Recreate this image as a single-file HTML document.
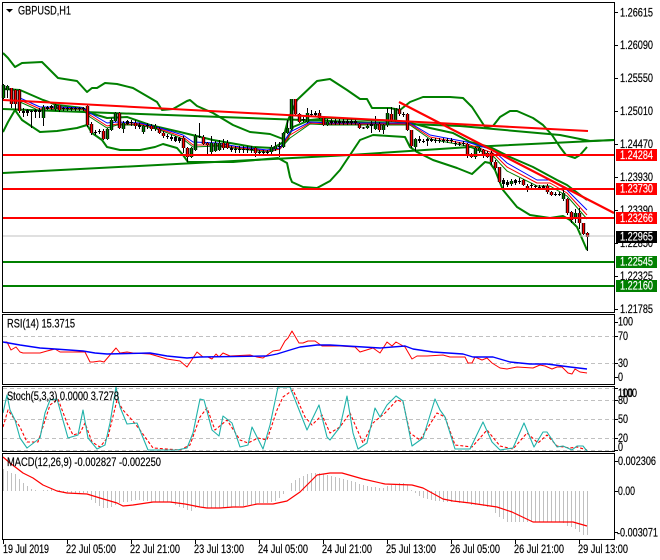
<!DOCTYPE html>
<html><head><meta charset="utf-8"><style>
html,body{margin:0;padding:0;background:#fff;width:660px;height:560px;overflow:hidden}
svg{display:block}
text{font-family:"Liberation Sans",sans-serif;font-size:11.5px;fill:#000;stroke:#000;stroke-width:.18px}
text.w{fill:#fff;stroke:#fff}
.n{fill:none;stroke-linejoin:round}
</style></head><body>
<svg width="660" height="560" viewBox="0 0 660 560" xmlns="http://www.w3.org/2000/svg">
<rect width="660" height="560" fill="#fff"/>
<defs>
<path id="r" fill="none" d="M11.5 88V104M15.5 90V104M19.5 90V111M59.5 105V110M87.5 106V125M91.5 124V133M103.5 131V139M119.5 113V128M135.5 123V126M151.5 126V129M159.5 129V133M163.5 133V136M183.5 138V148M187.5 148V157M203.5 137V144M207.5 143V145M223.5 143V148M227.5 143V148M255.5 148V153M295.5 99V114M299.5 114V122M319.5 113V118M323.5 118V125M359.5 124V128M379.5 124V130M391.5 114V121M399.5 109V114M407.5 114V130M411.5 130V146M467.5 144V155M471.5 154V157M483.5 150V156M487.5 153V157M491.5 153V162M495.5 162V168M499.5 167V182M523.5 180V185M527.5 186V189M547.5 186V192M551.5 192V195M567.5 199V213M571.5 212V220M579.5 213V223M583.5 223V234M587.5 233V237"/>
<path id="g" fill="none" d="M3.5 85V98M7.5 86V90M43.5 107V118M55.5 105V109M107.5 129V139M111.5 120V130M115.5 113V121M123.5 123V129M143.5 126V132M155.5 126V129M191.5 148V157M195.5 136V150M211.5 143V152M215.5 143V151M219.5 143V150M271.5 147V152M275.5 146V149M283.5 133V147M287.5 128V133M291.5 99V129M307.5 113V122M327.5 122V125M367.5 126V128M375.5 124V129M383.5 125V130M387.5 113V125M395.5 108V121M415.5 139V147M475.5 148V157M479.5 148V151M511.5 181V184M563.5 193V199M575.5 213V219"/>
</defs>
<!-- bollinger -->
<g class="n" stroke="#008000" stroke-width="2">
<path class="n" d="M3 53L8 58L15 67L22 63L42 62L48 68L58 78L77 81L87 92L92 88L97 88L105 83L117 84L133 88L157 102L162 110L173 109L187 101L190 100L197 106L213 113L233 125L250 132L270 134L283 139L288 120L297 100L317 81L330 79L347 90L360 99L367 99L372 108L390 108L400 110L410 102L423 97L450 97L463 98L472 107L485 127L493 126L500 117L510 111L517 111L533 118L543 125L552 135L560 147L566 155L575 158L580 155L587 147"/>
<path class="n" d="M3 132L8 122L15 110L22 120L40 132L57 131L77 128L87 125L92 133L102 140L107 147L120 150L140 150L155 147L163 144L177 148L183 155L188 162L200 162L233 162L267 159L278 158L287 163L290 177L292 182L303 187L317 188L330 181L340 170L350 155L360 140L373 135L405 137L410 147L417 152L433 160L457 168L472 174L485 162L490 163L495 170L503 190L517 207L530 215L550 218L563 216L570 220L577 227L587 250"/>
<path class="n" d="M3 89L20 90L43 100L57 105L83 108L90 113L107 118L127 117L150 125L180 132L213 140L253 147L273 148L287 140L293 127L310 120L330 118L407 122L430 128L453 133L470 142L490 147L510 157L533 167L557 180L567 185L587 200"/>
</g>
<g class="n" stroke="#008000" stroke-width="2">
<path class="n" d="M3 173L350 155L470 147L614 140"/>
<path class="n" d="M3 109L330 121L460 126L560 135L590 141L614 140"/>
</g>
<!-- MAs -->
<path class="n" stroke="#008000" stroke-width="1" d="M20 102L40 111L57 109L83 110L90 117L107 128L117 125L140 125L160 130L183 139L193 147L217 146L240 149L267 152L280 149L290 138L310 124L330 125L410 125L430 139L467 146L493 156L507 171L537 186L550 186L567 196L587 219"/>
<path class="n" stroke="#f00" stroke-width="1" d="M20 100L40 109L57 108L83 109L90 115L107 126L117 124L140 124L160 129L183 137L193 145L217 145L240 148L267 151L280 149L290 135L310 123L330 124L410 124L430 137L467 144L493 153L507 167L537 183L550 183L567 193L587 215"/>
<path class="n" stroke="#00f" stroke-width="1" d="M20 98L40 107L57 107L83 108L90 113L107 123L117 122L140 123L160 128L183 135L193 142L217 143L240 147L267 150L280 148L290 132L310 122L330 123L410 123L430 135L467 142L493 150L507 163L537 180L550 180L567 190L587 210"/>
<!-- candles -->
<path class="n" stroke="#000" stroke-width="1" d="M3.5 84V99M7.5 85V98M11.5 88V108M15.5 89V110M19.5 89V113M23.5 108V117M27.5 109V116M31.5 110V128M35.5 109V118M39.5 108V118M43.5 105V126M47.5 106V110M51.5 105V110M55.5 104V111M59.5 105V112M63.5 107V111M67.5 107V111M71.5 107V111M75.5 107V111M79.5 107V111M83.5 107V111M87.5 105V127M91.5 122V135M95.5 130V135M99.5 129V134M103.5 129V140M107.5 128V140M111.5 118V131M115.5 112V122M119.5 112V129M123.5 121V133M127.5 120V125M131.5 120V126M135.5 120V129M139.5 123V129M143.5 125V134M147.5 123V129M151.5 124V131M155.5 124V131M159.5 127V134M163.5 131V138M167.5 134V139M171.5 135V141M175.5 136V142M179.5 137V143M183.5 136V153M187.5 147V162M191.5 147V158M195.5 134V151M199.5 123V138M203.5 135V145M207.5 142V154M211.5 136V155M215.5 141V152M219.5 140V151M223.5 139V150M227.5 140V149M231.5 146V152M235.5 146V153M239.5 146V153M243.5 146V153M247.5 146V153M251.5 146V153M255.5 147V157M259.5 150V155M263.5 150V156M267.5 150V156M271.5 145V154M275.5 142V151M279.5 142V157M283.5 132V148M287.5 120V134M291.5 99V130M295.5 99V115M299.5 113V123M303.5 117V122M307.5 108V123M311.5 110V117M315.5 111V116M319.5 110V119M323.5 117V126M327.5 119V126M331.5 119V125M335.5 119V125M339.5 119V125M343.5 119V125M347.5 119V125M351.5 119V125M355.5 119V125M359.5 123V129M363.5 127V129M367.5 124V129M371.5 121V133M375.5 116V130M379.5 122V132M383.5 124V134M387.5 108V127M391.5 107V122M395.5 108V122M399.5 105V116M403.5 112V117M407.5 113V131M411.5 130V148M415.5 138V151M419.5 136V143M423.5 139V143M427.5 138V146M431.5 138V142M435.5 138V143M439.5 138V143M443.5 138V143M447.5 138V143M451.5 138V143M455.5 141V146M459.5 142V146M463.5 141V146M467.5 143V158M471.5 153V158M475.5 147V159M479.5 147V153M483.5 149V158M487.5 151V158M491.5 151V165M495.5 160V170M499.5 167V183M503.5 178V190M507.5 180V187M511.5 179V186M515.5 179V185M519.5 178V184M523.5 179V186M527.5 184V192M531.5 183V188M535.5 185V189M539.5 185V190M543.5 185V189M547.5 184V194M551.5 191V196M555.5 192V196M559.5 192V196M563.5 190V201M567.5 198V215M571.5 211V223M575.5 209V223M579.5 208V229M583.5 223V235M587.5 232V251"/>
<path class="n" stroke="#000" stroke-width="3" d="M23.5 111V113M27.5 110V113M31.5 111V112M35.5 110V112M39.5 110V112M47.5 107V109M51.5 106V108M63.5 108V109M67.5 108V109M71.5 108V109M75.5 108V109M79.5 108V109M83.5 108V109M95.5 132V133M99.5 131V132M127.5 121V124M131.5 122V123M139.5 125V127M147.5 125V126M167.5 136V137M171.5 137V139M175.5 137V141M179.5 138V141M199.5 136V137M231.5 148V150M235.5 149V150M239.5 149V150M243.5 149V150M247.5 149V150M251.5 149V150M259.5 152V153M263.5 152V153M267.5 152V153M279.5 146V147M303.5 119V120M311.5 114V115M315.5 113V115M331.5 121V123M335.5 121V123M339.5 121V123M343.5 121V123M347.5 121V123M351.5 121V123M355.5 121V123M363.5 127.5V128.5M371.5 124V126M403.5 114V115M419.5 139V141M423.5 141V142M427.5 139V141M431.5 139V141M435.5 140V141M439.5 140V141M443.5 140V141M447.5 140V141M451.5 140V141M455.5 143V144M459.5 143.5V144.5M463.5 143V144M503.5 180V184M507.5 182V185M515.5 180V183M519.5 181V182M531.5 185V186M535.5 186V187M539.5 187V188M543.5 186V188M555.5 194V195M559.5 194V195"/>
<g stroke="#000" stroke-width="3.4"><use href="#r"/><use href="#g"/></g>
<use href="#r" stroke="#f00" stroke-width="1.6"/>
<use href="#g" stroke="#008000" stroke-width="1.6"/>
<!-- h lines -->
<rect x="3" y="235.5" width="611" height="1" fill="#c0c0c0"/>
<rect x="3" y="154" width="611" height="2" fill="#f00"/>
<rect x="3" y="188" width="611" height="2" fill="#f00"/>
<rect x="3" y="217" width="611" height="2" fill="#f00"/>
<rect x="3" y="261" width="611" height="2" fill="#008000"/>
<rect x="3" y="285" width="611" height="2" fill="#008000"/>
<path class="n" stroke="#f00" stroke-width="2" d="M3 100L588 131"/>
<path class="n" stroke="#f00" stroke-width="2.2" d="M399 102L614 213"/>
<!-- RSI -->
<g stroke="#c0c0c0" stroke-dasharray="4 3" fill="none"><path d="M3 336.5H614M3 363.5H614M3 400.5H614M3 419.5H614M3 438.5H614M3 388.5H614M3 450.5H614"/></g>
<path class="n" stroke="#f00" stroke-width="1" d="M3 342L7 342L11 350L16 347L20 352L23 353L40 353L47 351L55 349L60 352L82 352L85 352L90 362L93 362L100 361L104 362L116 348L120 353L127 352L133 353L150 354L167 359L180 361L187 367L197 352L203 357L208 357L212 359L216 354L219 357L223 353L230 356L250 355L257 357L263 358L273 351L280 350L285 341L288 338L292 331L299 343L303 343L308 341L315 341L322 346L340 346L355 347L360 352L373 348L380 353L387 342L392 346L396 342L405 347L412 359L417 356L427 356L443 355L450 357L465 357L468 363L472 363L475 357L482 360L487 358L492 363L500 368L507 369L517 367L533 368L540 365L545 366L552 369L557 367L562 367L568 373L572 374L575 369L580 372L587 373"/>
<path class="n" stroke="#00f" stroke-width="1.4" d="M3 342L20 345L40 348L55 349L83 351L95 353L107 354L150 353L167 356L187 358L200 357L267 356L277 354L290 350L300 347L317 345L330 345L347 346L380 348L405 346L413 349L433 352L463 354L473 357L493 357L510 362L530 364L547 364L570 367L587 369"/>
<!-- Stoch -->
<path class="n" stroke="#f00" stroke-width="1.1" stroke-dasharray="3 2" d="M3 427L8 410L20 427L27 442L38 442L50 405L58 399L67 423L73 435L80 433L85 423L92 442L100 447L108 437L117 400L123 410L132 420L140 430L153 448L180 450L190 445L200 417L207 408L215 430L227 420L240 440L248 443L258 438L267 440L277 410L283 397L293 390L305 417L312 425L322 415L330 433L340 427L350 413L363 443L373 423L385 413L397 400L403 402L410 433L420 440L437 413L445 417L455 445L472 447L487 430L500 446L513 449L527 433L538 443L547 435L557 446L570 448L577 447L587 450"/>
<path class="n" stroke="#20b2aa" stroke-width="1.1" d="M3 413L7 395L10 410L15 420L20 438L27 448L40 438L45 413L50 400L57 399L68 438L78 435L83 410L88 438L97 449L105 445L110 423L116 387L120 407L127 424L137 423L148 450L177 450L187 448L193 433L200 399L204 400L212 430L219 436L223 416L232 423L240 447L248 445L252 427L263 449L270 425L278 387L290 387L307 430L319 405L327 437L330 440L340 427L347 396L353 433L358 449L367 443L375 408L380 417L387 405L396 396L403 401L412 446L423 438L435 399L440 410L445 417L455 449L470 449L483 422L492 442L500 450L513 448L524 423L534 447L543 432L547 432L557 447L563 446L572 450L577 446L583 446L587 451"/>
<!-- MACD -->
<path class="n" stroke="#c0c0c0" stroke-width="1" d="M3.5 491V469M7.5 491V471M11.5 491V473M15.5 491V474M19.5 491V479M23.5 491V483M27.5 491V486M31.5 491V489M35.5 491V490M43.5 491V490M47.5 491V490M51.5 491V489M55.5 491V490M59.5 491V490M63.5 491V493M67.5 491V493M71.5 491V493M75.5 491V493M79.5 491V493M83.5 491V493M87.5 491V493M91.5 491V500M95.5 491V503M99.5 491V506M103.5 491V508M107.5 491V508M111.5 491V507M115.5 491V505M119.5 491V503M123.5 491V502M127.5 491V502M131.5 491V501M135.5 491V500M139.5 491V500M143.5 491V501M147.5 491V501M151.5 491V502M155.5 491V502M159.5 491V502M163.5 491V502M167.5 491V502M171.5 491V503M175.5 491V505M179.5 491V507M183.5 491V508M187.5 491V510M191.5 491V511M195.5 491V508M199.5 491V507M203.5 491V507M207.5 491V508M211.5 491V508M215.5 491V508M219.5 491V508M223.5 491V508M227.5 491V507M231.5 491V507M235.5 491V507M239.5 491V506M243.5 491V506M247.5 491V505M251.5 491V505M255.5 491V504M259.5 491V503M263.5 491V503M267.5 491V503M271.5 491V502M275.5 491V501M279.5 491V498M283.5 491V494M291.5 491V483M295.5 491V480M299.5 491V478M303.5 491V476M307.5 491V474M311.5 491V473M315.5 491V473M319.5 491V473M323.5 491V474M327.5 491V475M331.5 491V476M335.5 491V477M339.5 491V478M343.5 491V479M347.5 491V480M351.5 491V481M355.5 491V482M359.5 491V484M363.5 491V485M367.5 491V486M371.5 491V487M375.5 491V487M379.5 491V488M383.5 491V488M387.5 491V486M391.5 491V485M395.5 491V484M399.5 491V483M403.5 491V483M407.5 491V485M411.5 491V490M415.5 491V493M419.5 491V496M423.5 491V498M427.5 491V499M431.5 491V500M435.5 491V501M439.5 491V501M443.5 491V502M447.5 491V502M451.5 491V502M455.5 491V502M459.5 491V503M463.5 491V503M467.5 491V503M471.5 491V505M475.5 491V505M479.5 491V505M483.5 491V506M487.5 491V507M491.5 491V507M495.5 491V513M499.5 491V517M503.5 491V519M507.5 491V522M511.5 491V522M515.5 491V522M519.5 491V522M523.5 491V522M527.5 491V522M531.5 491V522M535.5 491V522M539.5 491V522M543.5 491V522M547.5 491V522M551.5 491V522M555.5 491V522M559.5 491V522M563.5 491V523M567.5 491V526M571.5 491V527M575.5 491V529M579.5 491V532M583.5 491V535M587.5 491V535"/>
<path class="n" stroke="#f00" stroke-width="1.2" d="M3 457L10 463L23 473L33 478L43 485L57 491L67 493L87 494L100 498L117 503L123 506L133 505L153 502L170 502L185 504L200 507L207 508L220 508L233 507L243 507L257 504L273 504L287 501L300 492L317 475L330 473L342 473L363 479L385 484L412 485L423 488L443 499L453 501L470 503L497 507L512 512L533 522L557 522L573 522L587 526"/>
<!-- frames -->
<g fill="#000" shape-rendering="crispEdges">
<rect x="2" y="2" width="613" height="1"/>
<rect x="2" y="2" width="1" height="310"/><rect x="2" y="312" width="613" height="1"/>
<rect x="614" y="2" width="1" height="311"/>
<rect x="2" y="314" width="613" height="1"/><rect x="2" y="314" width="1" height="70"/><rect x="2" y="384" width="613" height="1"/><rect x="614" y="314" width="1" height="71"/>
<rect x="2" y="386" width="613" height="1"/><rect x="2" y="386" width="1" height="65"/><rect x="2" y="451" width="613" height="1"/><rect x="614" y="386" width="1" height="66"/>
<rect x="2" y="453" width="613" height="1"/><rect x="2" y="453" width="1" height="86"/><rect x="2" y="539" width="613" height="1"/><rect x="614" y="453" width="1" height="87"/>
</g>
<path stroke="#000" fill="none" shape-rendering="crispEdges" d="M615 12.5H618M615 45.5H618M615 78.5H618M615 111.5H618M615 144.5H618M615 177.5H618M615 210.5H618M615 243.5H618M615 276.5H618M615 309.5H618M615 322.5H618M615 336.5H618M615 363.5H618M615 377.5H618M615 388.5H618M615 400.5H618M615 419.5H618M615 438.5H618M615 450.5H618M615 461.5H618M615 491.5H618M615 532.5H618M3.5 540V544M67.5 540V544M131.5 540V544M195.5 540V544M259.5 540V544M323.5 540V544M387.5 540V544M451.5 540V544M515.5 540V544M579.5 540V544"/>
<path d="M6 9H13L9.5 12.5Z" fill="#000"/>
<!-- titles -->
<text x="18" y="14.5" textLength="53" lengthAdjust="spacingAndGlyphs">GBPUSD,H1</text>
<text x="7" y="327.5" textLength="68" lengthAdjust="spacingAndGlyphs">RSI(14) 15.3715</text>
<text x="7" y="400" textLength="112" lengthAdjust="spacingAndGlyphs">Stoch(5,3,3) 0.0000 3.7278</text>
<text x="7" y="466" textLength="154" lengthAdjust="spacingAndGlyphs">MACD(12,26,9) -0.002827 -0.002250</text>
<!-- price axis -->
<g>
<text x="620" y="16.5" textLength="33" lengthAdjust="spacingAndGlyphs">1.26615</text>
<text x="620" y="49" textLength="33" lengthAdjust="spacingAndGlyphs">1.26090</text>
<text x="620" y="82" textLength="33" lengthAdjust="spacingAndGlyphs">1.25550</text>
<text x="620" y="115" textLength="33" lengthAdjust="spacingAndGlyphs">1.25010</text>
<text x="620" y="148" textLength="33" lengthAdjust="spacingAndGlyphs">1.24470</text>
<text x="620" y="181" textLength="33" lengthAdjust="spacingAndGlyphs">1.23930</text>
<text x="620" y="214" textLength="33" lengthAdjust="spacingAndGlyphs">1.23390</text>
<text x="620" y="247" textLength="33" lengthAdjust="spacingAndGlyphs">1.22850</text>
<text x="620" y="280" textLength="33" lengthAdjust="spacingAndGlyphs">1.22325</text>
<text x="620" y="313" textLength="33" lengthAdjust="spacingAndGlyphs">1.21785</text>
</g>
<rect x="616" y="149" width="41" height="12" fill="#f00"/><text class="w" x="620" y="159" textLength="33" lengthAdjust="spacingAndGlyphs">1.24284</text>
<rect x="616" y="183" width="41" height="12" fill="#f00"/><text class="w" x="620" y="192.5" textLength="33" lengthAdjust="spacingAndGlyphs">1.23730</text>
<rect x="616" y="212" width="41" height="12" fill="#f00"/><text class="w" x="620" y="222" textLength="33" lengthAdjust="spacingAndGlyphs">1.23266</text>
<rect x="616" y="231" width="41" height="12" fill="#000"/><text class="w" x="620" y="240.5" textLength="33" lengthAdjust="spacingAndGlyphs">1.22965</text>
<rect x="616" y="256" width="41" height="12" fill="#008000"/><text class="w" x="620" y="265.5" textLength="33" lengthAdjust="spacingAndGlyphs">1.22545</text>
<rect x="616" y="280" width="41" height="12" fill="#008000"/><text class="w" x="620" y="289.5" textLength="33" lengthAdjust="spacingAndGlyphs">1.22160</text>
<!-- sub axis -->
<text x="618" y="325.5" textLength="15" lengthAdjust="spacingAndGlyphs">100</text>
<text x="618" y="340" textLength="10" lengthAdjust="spacingAndGlyphs">70</text>
<text x="618" y="367" textLength="10" lengthAdjust="spacingAndGlyphs">30</text>
<text x="618" y="381" textLength="5" lengthAdjust="spacingAndGlyphs">0</text>
<text x="618" y="397" textLength="15" lengthAdjust="spacingAndGlyphs">100</text>
<text x="622" y="397" textLength="15" lengthAdjust="spacingAndGlyphs">100</text>
<text x="618" y="404" textLength="10" lengthAdjust="spacingAndGlyphs">80</text>
<text x="618" y="423" textLength="10" lengthAdjust="spacingAndGlyphs">50</text>
<text x="618" y="442" textLength="10" lengthAdjust="spacingAndGlyphs">20</text>
<text x="618" y="451" textLength="5" lengthAdjust="spacingAndGlyphs">0</text>
<text x="618" y="465" textLength="38" lengthAdjust="spacingAndGlyphs">0.002306</text>
<text x="618" y="495" textLength="17" lengthAdjust="spacingAndGlyphs">0.00</text>
<text x="617" y="536.5" textLength="41" lengthAdjust="spacingAndGlyphs">-0.003071</text>
<!-- time axis -->
<text x="3" y="553" textLength="46" lengthAdjust="spacingAndGlyphs">19 Jul 2019</text>
<text x="66" y="553" textLength="50" lengthAdjust="spacingAndGlyphs">22 Jul 05:00</text>
<text x="130" y="553" textLength="50" lengthAdjust="spacingAndGlyphs">22 Jul 21:00</text>
<text x="194" y="553" textLength="50" lengthAdjust="spacingAndGlyphs">23 Jul 13:00</text>
<text x="258" y="553" textLength="50" lengthAdjust="spacingAndGlyphs">24 Jul 05:00</text>
<text x="322" y="553" textLength="50" lengthAdjust="spacingAndGlyphs">24 Jul 21:00</text>
<text x="386" y="553" textLength="50" lengthAdjust="spacingAndGlyphs">25 Jul 13:00</text>
<text x="450" y="553" textLength="50" lengthAdjust="spacingAndGlyphs">26 Jul 05:00</text>
<text x="514" y="553" textLength="50" lengthAdjust="spacingAndGlyphs">26 Jul 21:00</text>
<text x="578" y="553" textLength="50" lengthAdjust="spacingAndGlyphs">29 Jul 13:00</text>
</svg>
</body></html>
